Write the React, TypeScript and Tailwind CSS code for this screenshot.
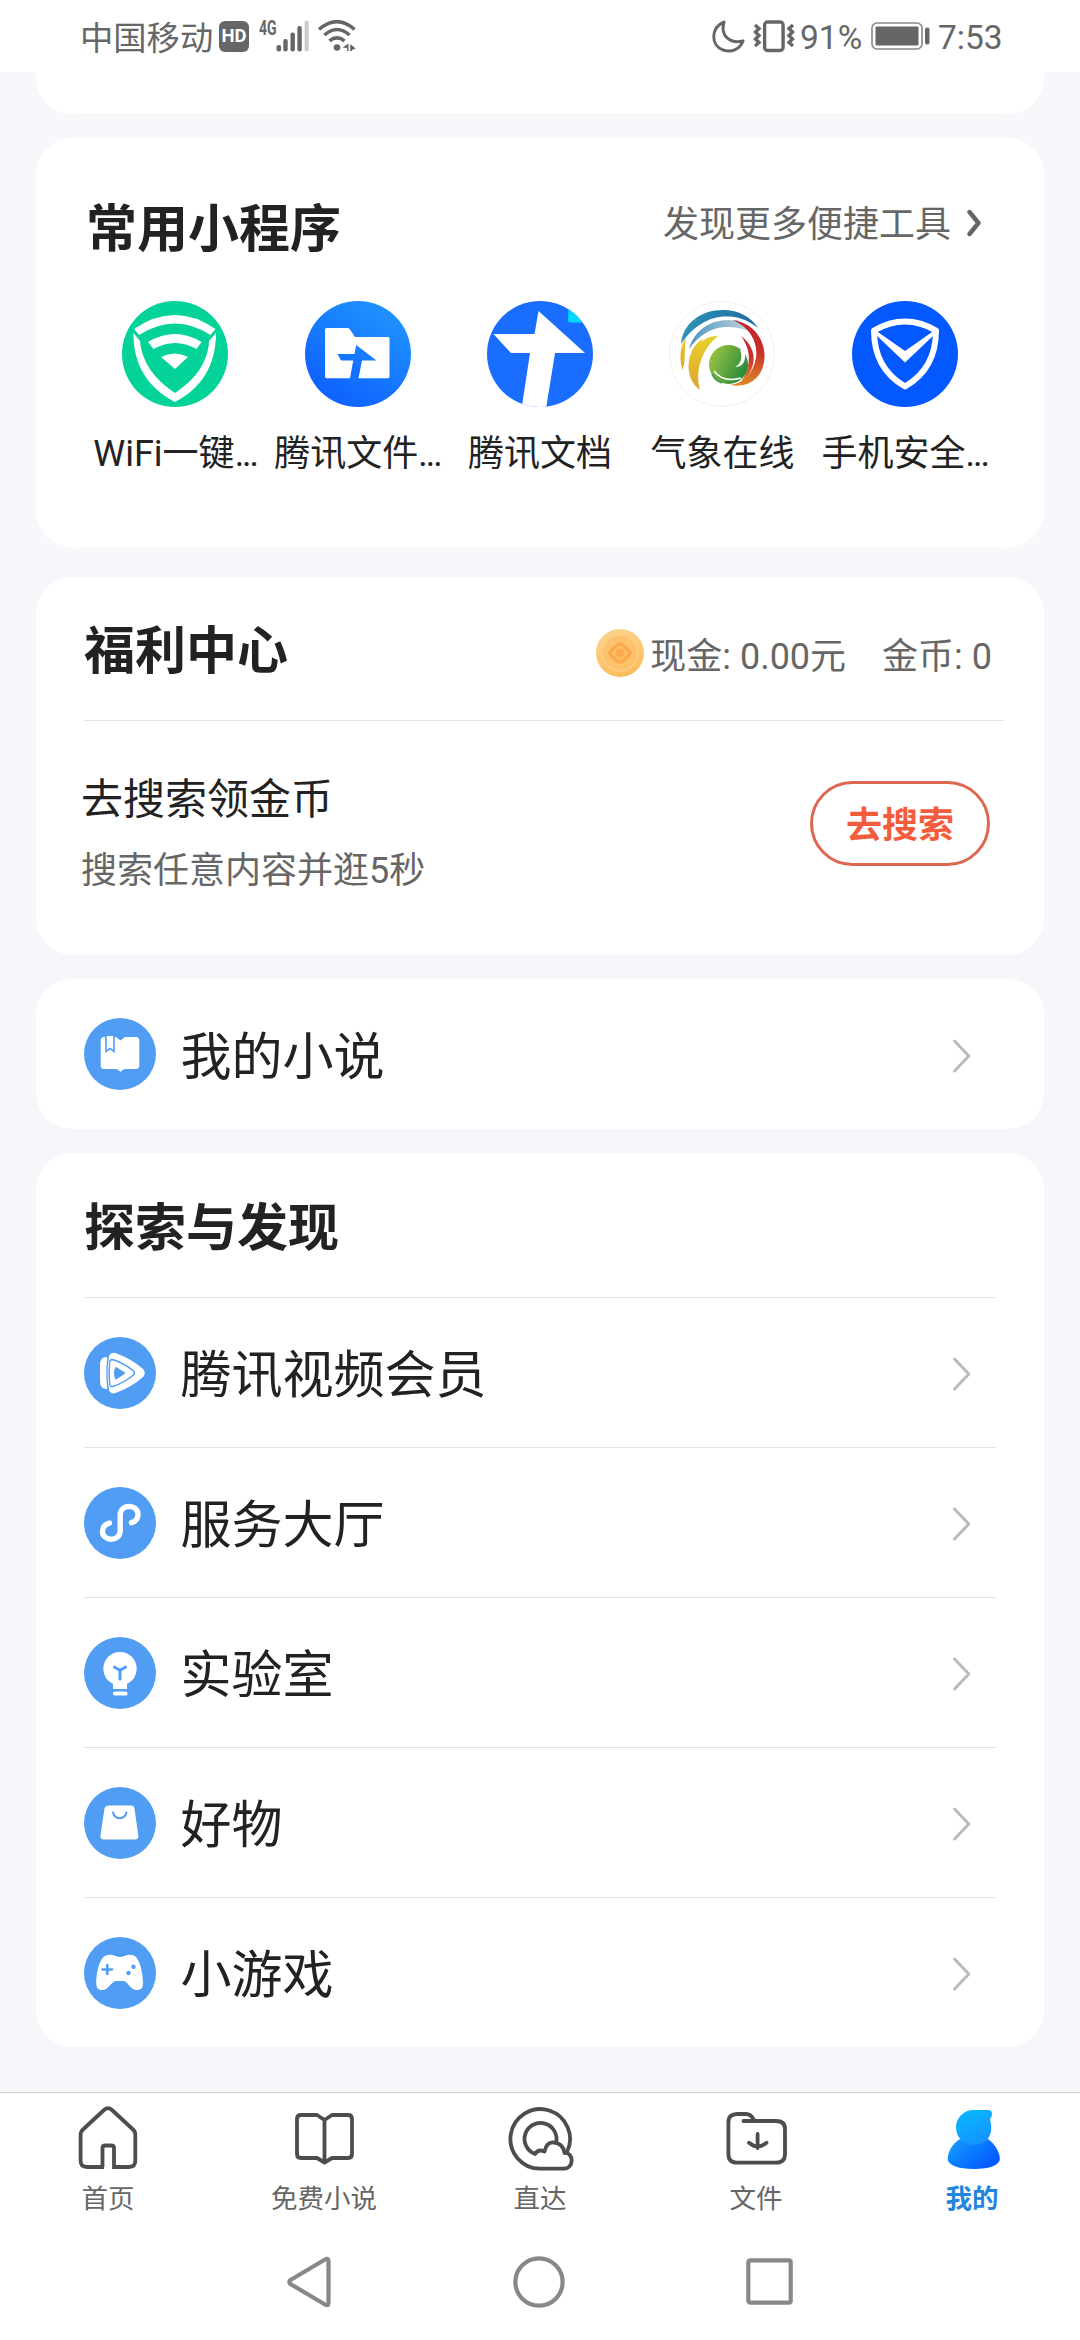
import type { ReactNode } from "react";

function StatusBar() {
  return (
    <header className="flex h-[72px] items-center justify-between bg-white pr-[78px] pl-[80px] text-[#666]">
      <div className="flex items-center">
        <span className="w-[134px] pt-[5px] text-[33.3px] leading-[40px] whitespace-nowrap">中国移动</span>
        <span className="ml-[5px] flex h-[31px] w-[30px] items-center justify-center rounded-[6px] bg-[#666] text-[18.5px] leading-none font-bold text-white">
          HD
        </span>
        <span className="mt-[-17px] ml-[10px] inline-block w-[18px] origin-left scale-x-70 text-[20px] leading-none font-bold">4G</span>
        <svg width="34" height="32" viewBox="0 0 34 32" className="-ml-px" fill="#666">
          <rect x="0.5" y="25" width="4.6" height="6.5" rx="2" />
          <rect x="7.3" y="19" width="4.4" height="12.5" rx="2" />
          <rect x="14.5" y="12.5" width="4.4" height="19" rx="2" />
          <rect x="21.4" y="6" width="4.4" height="25.5" rx="2" />
          <rect x="28.6" y="0.5" width="4.2" height="31" rx="2" fill="#ccc" />
        </svg>
        <svg width="40" height="32" viewBox="0 0 40 32" className="ml-[8px]" fill="none" stroke="#666" strokeWidth="3.6">
          <path d="M1 9.5Q19 -6 36.500 9.500M6.500 15Q19 4 31.500 15M11.500 20.800Q19 15 26.500 20.800" />
          <circle cx="19" cy="27.500" r="3.300" fill="#666" stroke="none" />
          <path d="M30.500 23.500V31H29V28L24.500 27.500ZM32.200 24L37.700 28.500L34 30V31H32.200Z" fill="#666" stroke="none" />
        </svg>
      </div>
      <div className="flex items-center">
        <svg width="34" height="34" viewBox="0 0 34 34" fill="none" stroke="#666" strokeWidth="3" strokeLinejoin="round">
          <path d="M12 3C-2 9-1 27 11 31C20 34 28 30 31 22C18 25 8 17 12 3Z" />
        </svg>
        <svg width="42" height="34" viewBox="0 0 42 34" className="ml-[7px]" fill="none" stroke="#666" strokeWidth="3.4">
          <rect x="11.600" y="3" width="18.500" height="28.500" rx="3" />
          <path d="M2 6L6 9.500L2.500 13L6 16.500L2.500 20L6 23.500L2 27M40 6L36 9.500L39.500 13L36 16.500L39.500 20L36 23.500L40 27" />
        </svg>
        <span className="ml-[5px] w-[72px] pt-[3px] text-[33.5px] leading-[40px]">91%</span>
        <svg width="60" height="28" viewBox="0 0 60 28" className="-ml-px">
          <rect x="1" y="1" width="50" height="26" rx="5" fill="none" stroke="#888" strokeWidth="1.600" />
          <rect x="4.500" y="4.500" width="43" height="19" rx="1" fill="#666" />
          <rect x="54" y="5.500" width="4.500" height="17" rx="2" fill="#666" />
        </svg>
        <span className="ml-[7px] w-[64px] pt-[3px] text-[33.5px] leading-[40px]">7:53</span>
      </div>
    </header>
  );
}

function WifiManagerIcon() {
  return (
    <svg width="106" height="106" viewBox="0 0 106 106">
      <circle cx="53" cy="53" r="53" fill="#03d398" />
      <g fill="#fff">
        <path d="M12 28Q53 0 93.500 28L88.500 34Q53 11 17 34Z" />
        <path d="M26 41Q53 25 79.500 41L74.500 48Q53 36 31.500 48Z" />
        <path d="M39 56Q53 49 66 56L53 68Z" />
        <path d="M11.500 32L18 40C20 61 32 78 53 92C74 78 86 61 87 40L94 32C94 64 80 87 53 101C26 87 11 64 11.500 32Z" />
      </g>
    </svg>
  );
}

function FileFolderIcon() {
  return (
    <svg width="106" height="106" viewBox="0 0 106 106">
      <defs>
        <linearGradient id="folderBlue" x1="0.2" y1="1" x2="0.8" y2="0.1">
          <stop offset="0" stopColor="#0d5dff" />
          <stop offset="1" stopColor="#1f92fd" />
        </linearGradient>
      </defs>
      <circle cx="53" cy="53" r="53" fill="url(#folderBlue)" />
      <path d="M21.500 27H42.500Q44 27 44.800 28.200L50 36H83Q84.500 36 84.500 37.500V75.500Q84.500 77.300 83 77.300H53.500L57 59.500H71.500L51.200 44L49.500 53H32.500L36 59.500H48.200L45 77.300H21.500Q20 77.300 20 75.500V28.500Q20 27 21.500 27Z" fill="#fff" />
    </svg>
  );
}

function DocsIcon() {
  return (
    <svg width="106" height="106" viewBox="0 0 106 106">
      <defs>
        <clipPath id="docsCircle">
          <circle cx="53" cy="53" r="53" />
        </clipPath>
      </defs>
      <g clipPath="url(#docsCircle)">
        <rect width="106" height="106" fill="#1a6eff" />
        <path d="M51.500 10L98 52H68L59 108H34.500L43 52H24L6.500 33H47.500Z" fill="#fff" />
        <path d="M82 0L81 19Q81 21.500 83.500 21.500H106V0Z" fill="#00d9ff" />
      </g>
    </svg>
  );
}

function WeatherIcon() {
  return (
    <svg width="106" height="106" viewBox="0 0 106 106">
      <defs>
        <linearGradient id="wGreen" x1="0" y1="0" x2="1" y2="0.5">
          <stop offset="0" stopColor="#a9cb45" />
          <stop offset="1" stopColor="#2c8c3a" />
        </linearGradient>
        <linearGradient id="wRed" x1="0" y1="0" x2="0" y2="1">
          <stop offset="0" stopColor="#c3232b" />
          <stop offset="0.500" stopColor="#c8322a" />
          <stop offset="1" stopColor="#dd8a26" />
        </linearGradient>
        <linearGradient id="wBlue" x1="0" y1="0" x2="1" y2="0">
          <stop offset="0" stopColor="#2f93b8" />
          <stop offset="1" stopColor="#216a9f" />
        </linearGradient>
        <linearGradient id="wSky" x1="0" y1="0" x2="1" y2="0">
          <stop offset="0" stopColor="#4a96c0" />
          <stop offset="1" stopColor="#c9d6de" />
        </linearGradient>
        <linearGradient id="wYellow" x1="0" y1="0" x2="0" y2="1">
          <stop offset="0" stopColor="#e8d02c" />
          <stop offset="1" stopColor="#dfa32e" />
        </linearGradient>
      </defs>
      <circle cx="53" cy="53" r="52.500" fill="#fff" stroke="#f1eeee" />
      <path d="M12 43C14 22 32 9 54 9C70 9 82 16 89 27C77 17 66 15 54 15.500C36 17 22 28 12 43Z" fill="url(#wBlue)" />
      <path d="M20 48C25 30 40 19 60 19C72 20 80 25 84 32C75 27 66 26 55 26C42 27 30 34 20 48Z" fill="url(#wSky)" />
      <path d="M64 19C84 22 96 38 95.500 56C95 76 80 88 61 84C76 82 84 72 87 57C89 42 82 27 64 19Z" fill="url(#wRed)" />
      <path d="M72 35C84 44 87 56 83 67C80 75 76 79 72 81C82 66 83 50 72 35Z" fill="url(#wRed)" />
      <path d="M17 36C11 45 10 57 13.500 69C17 60 15 49 17 36Z" fill="url(#wYellow)" />
      <path d="M49 35C42 35 37 37 33 41L34 38C18 46 13 76 31 89C26 70 32 49 49 35Z" fill="url(#wYellow)" />
      <circle cx="59.500" cy="63.500" r="19.500" fill="url(#wGreen)" />
      <path d="M71 48C74 57 72 63 66 66C74 66 77 60 76 51Z" fill="#fff" />
      <path d="M45 70Q54 82 72 77" stroke="#fff" strokeWidth="1.500" fill="none" />
      <path d="M43 73Q46 80 53 82" stroke="#3d9540" strokeWidth="1.500" fill="none" />
    </svg>
  );
}

function SecurityIcon() {
  return (
    <svg width="106" height="106" viewBox="0 0 106 106">
      <circle cx="53" cy="53" r="53" fill="#0359ff" />
      <path d="M22 29.500Q53 11.500 84 29.500C84 55 73 74 53 85.500C33 74 22 55 22 29.500Z" fill="none" stroke="#fff" strokeWidth="6" strokeLinejoin="round" />
      <path d="M23 29L53 50L83 29L83 33L53 61.500L23 33Z" fill="#fff" />
    </svg>
  );
}

const miniApps: { label: string; clipped?: boolean; icon: ReactNode }[] = [
  { label: "WiFi一键", clipped: true, icon: <WifiManagerIcon /> },
  { label: "腾讯文件", clipped: true, icon: <FileFolderIcon /> },
  { label: "腾讯文档", icon: <DocsIcon /> },
  { label: "气象在线", icon: <WeatherIcon /> },
  { label: "手机安全", clipped: true, icon: <SecurityIcon /> },
];

function MiniApps() {
  return (
    <section className="mt-6 h-[409px] rounded-[36px] bg-white px-12 pt-[59px] shadow-[0_2px_24px_0_#fafafa]">
      <div className="flex h-[60px] items-center justify-between pr-[14px] pl-[2px]">
        <h2 className="pt-[5px] text-[51px] leading-[60px] font-bold">常用小程序</h2>
        <div className="-mt-1 flex items-center text-[36px] leading-[40px] text-[#666]">
          发现更多便捷工具
          <svg width="16" height="28" viewBox="0 0 16 28" className="-mt-1 ml-[15px]" fill="none" stroke="#666" strokeWidth="4.400" strokeLinecap="round" strokeLinejoin="round">
            <path d="M3.500 3L12.500 14L3.500 25" />
          </svg>
        </div>
      </div>
      <div className="mt-[44px] grid w-[912px] grid-cols-5">
        {miniApps.map((a) => (
          <div key={a.label} className="flex flex-col items-center">
            {a.icon}
            <span className="mt-[26px] text-[36px] leading-[42px] whitespace-nowrap">
              {a.label}
              {a.clipped && <span className="tracking-[-2px]">...</span>}
            </span>
          </div>
        ))}
      </div>
    </section>
  );
}

function Coin() {
  return (
    <svg width="48" height="48" viewBox="0 0 48 48">
      <defs>
        <linearGradient id="coin" x1="0.300" y1="0" x2="0.600" y2="1">
          <stop offset="0" stopColor="#fcd38b" />
          <stop offset="1" stopColor="#fcbb59" />
        </linearGradient>
      </defs>
      <circle cx="24" cy="24" r="24" fill="url(#coin)" />
      <circle cx="24" cy="24" r="18" fill="#fdc36c" stroke="#fccf86" strokeWidth="1.500" />
      <path d="M13.500 24Q20 15 24 15T34.500 24Q28 33 24 33T13.500 24Z" fill="#fdbd62" stroke="#fba94a" strokeWidth="3" strokeLinejoin="round" />
      <circle cx="24" cy="24" r="4.300" fill="#fbab4d" />
    </svg>
  );
}

function Welfare() {
  return (
    <section className="mt-[30px] h-[378px] rounded-[36px] bg-white pl-12">
      <div className="mr-[41px] flex h-[144px] items-center justify-between border-b border-[#e2e2e2] pr-[11px]">
        <h2 className="pt-[7px] text-[51px] leading-[60px] font-bold">福利中心</h2>
        <div className="flex items-center pt-[16px] text-[36px] leading-[42px] text-[#666]">
          <span className="mt-[-7px] mr-[6px]">
            <Coin />
          </span>
          <span>现金: 0.00元</span>
          <span className="ml-[36px]">金币: 0</span>
        </div>
      </div>
      <div className="mr-[54px] flex items-start justify-between pt-[53px]">
        <div className="-ml-[3px] pt-px">
          <div className="text-[42px] leading-[50px]">去搜索领金币</div>
          <div className="mt-[22px] text-[36px] leading-[48px] text-[#666]">搜索任意内容并逛5秒</div>
        </div>
        <button className="mt-[7px] flex h-[85px] w-[180px] items-center justify-center rounded-full border-3 border-[#dd6650] pt-[5px] text-[36px] font-bold text-[#f45c3e]">
          去搜索
        </button>
      </div>
    </section>
  );
}

function Disc({ children }: { children: ReactNode }) {
  return (
    <svg width="72" height="72" viewBox="0 0 72 72" className="shrink-0">
      <circle cx="36" cy="36" r="36" fill="#509df3" />
      {children}
    </svg>
  );
}

const novelIcon = (
  <Disc>
    <path d="M20 19H32L36.500 22.500L41 19H52Q55.300 19 55.300 22.500V47.500Q55.300 51 52 51H41Q39 51 36.500 54Q34 51 32 51H20Q16.700 51 16.700 47.500V22.500Q16.700 19 20 19Z" fill="#fff" />
    <path d="M22 18V33.500L26 30.500L30 33.500V18" fill="#fff" stroke="#509df3" strokeWidth="1.600" />
  </Disc>
);

const videoIcon = (
  <Disc>
    <path d="M24 20Q16 19 16 28V44Q16 53 24 52Z" fill="#fff" />
    <path d="M31.500 16Q25.500 15 24.500 21Q22.500 36 24.500 51Q25.500 58 31.500 56Q48 50 59 40Q62.500 36 59 32Q48 22 31.500 16Z" fill="#fff" />
    <path d="M24 20Q22 36 24 52" fill="none" stroke="#509df3" strokeWidth="1.300" />
    <path d="M28.500 22.500Q26 22.500 25.700 25Q24.500 36 25.700 47Q26 50 28.500 49.500Q40 46 49.500 38Q51.500 36 49.500 34Q40 26 28.500 22.500Z" fill="none" stroke="#509df3" strokeWidth="1.400" />
    <path d="M32 31L40 36.200L32 41.400Q30 36.200 32 31Z" fill="#509df3" stroke="#509df3" strokeWidth="2" strokeLinejoin="round" />
  </Disc>
);

const serviceIcon = (
  <Disc>
    <path d="M25.500 36C20 37.500 18.500 41 18.500 44.500C18.500 49 22.500 52.300 27 52.300C32 52.300 36.200 49 36.200 44V28C36.200 23 40 19.500 45 19.500C50 19.500 54 22.500 54 27.500C54 31 52 34.500 47.500 35.700" fill="none" stroke="#fff" strokeWidth="5.400" strokeLinecap="round" />
  </Disc>
);

const labIcon = (
  <Disc>
    <path d="M29 52V47Q19.300 42 19.300 31.500A16.700 16.500 0 0 1 52.700 31.500Q52.700 42 43 47V52Z" fill="#fff" />
    <rect x="29" y="54.500" width="14.500" height="4" rx="1.500" fill="#fff" />
    <path d="M30.500 30L36 33.500L41.500 30M36 34V42" fill="none" stroke="#509df3" strokeWidth="3" strokeLinecap="round" />
  </Disc>
);

const goodsIcon = (
  <Disc>
    <path d="M25 18.500H47Q50 18.500 50.500 21.500L54.300 48.500Q54.800 52.500 51 52.500H20Q16 52.500 16.500 48.500L20.500 21.500Q21 18.500 25 18.500Z" fill="#fff" />
    <path d="M29 25.500C31 33 40.500 33 42.500 25.500" fill="none" stroke="#509df3" strokeWidth="2" strokeLinecap="round" />
  </Disc>
);

const gameIcon = (
  <Disc>
    <path d="M24 18C29 17 31 20 36 20C41 20 43 17 48 18C55 18 59 35 59 46C59 51 57 53 53 53C46 53 44 44.500 39.500 44H32C27 44.500 25 53 18 53C14 53 12.300 51 12.300 46C12.300 35 16 18 24 18Z" fill="#fff" />
    <path d="M23.300 28V37M18.500 32.500H28" stroke="#509df3" strokeWidth="2.600" strokeLinecap="round" />
    <circle cx="49.500" cy="29.700" r="2.200" fill="#509df3" />
    <circle cx="44.500" cy="36" r="2.200" fill="#509df3" />
  </Disc>
);

function Row({ icon, label }: { icon: ReactNode; label: string }) {
  return (
    <div className="flex grow items-center">
      {icon}
      <span className="ml-[24.5px] grow pt-[7px] text-[51px] leading-[60px]">{label}</span>
      <svg width="20" height="36" viewBox="0 0 20 36" className="mt-[3px] mr-[25px]" fill="none" stroke="#bababa" strokeWidth="3" strokeLinecap="round" strokeLinejoin="round">
        <path d="M3.500 3L17.800 18L3.500 33" />
      </svg>
    </div>
  );
}

const explore: { label: string; icon: ReactNode }[] = [
  { label: "腾讯视频会员", icon: videoIcon },
  { label: "服务大厅", icon: serviceIcon },
  { label: "实验室", icon: labIcon },
  { label: "好物", icon: goodsIcon },
  { label: "小游戏", icon: gameIcon },
];

function Explore() {
  return (
    <section className="mt-6 h-[894px] rounded-[36px] bg-white px-12">
      <h2 className="flex h-[144px] items-center pt-[7px] text-[51px] leading-[60px] font-bold">探索与发现</h2>
      {explore.map((e) => (
        <div key={e.label} className="flex h-[150px] border-t border-[#e2e2e2]">
          <Row icon={e.icon} label={e.label} />
        </div>
      ))}
    </section>
  );
}

function TabIcon({ children }: { children: ReactNode }) {
  return (
    <svg width="72" height="72" viewBox="0 0 72 72" fill="none" stroke="#4d4d4d" strokeWidth="3.800" strokeLinejoin="round">
      {children}
    </svg>
  );
}

const tabs: { label: string; icon: ReactNode; active?: boolean }[] = [
  {
    label: "首页",
    icon: (
      <TabIcon>
        <path d="M32 65H15Q8.600 65 8.600 58.500V33Q8.600 29.500 11.500 27L32 8Q36 4.500 40 8L60.500 27Q63.300 29.500 63.300 33V58.500Q63.300 65 57 65H42V46Q42 43.500 39 43.500H33.500Q30.500 43.500 30.500 46V65" strokeLinejoin="miter" />
      </TabIcon>
    ),
  },
  {
    label: "免费小说",
    icon: (
      <TabIcon>
        <path d="M36.500 18L29 13H13Q9 13 9 17V52Q9 56 13 56H29L36.500 60.500L44 56H60Q64 56 64 52V17Q64 13 60 13H44ZM36.500 18V60" />
      </TabIcon>
    ),
  },
  {
    label: "直达",
    icon: (
      <TabIcon>
        <path d="M60.500 66.700H36A29.800 29.800 0 1 1 63 50" />
        <path d="M52 41A16 16 0 1 0 31 52Q34 46.500 40.500 49.500C42 42 46 40 50 40.500C55 41 59.500 44 60.500 51C65 50.500 67.700 54.500 67.700 58.500C67.700 63.500 64 66.700 60 66.700" />
      </TabIcon>
    ),
  },
  {
    label: "文件",
    icon: (
      <TabIcon>
        <path d="M23.500 19H56Q65 19 65 27V52Q65 60.700 56 60.700H17Q8.400 60.700 8.400 52V20Q8.400 12 17 12H26Q31 12 34 18" strokeLinecap="round" />
        <path d="M37.600 32V46M29 40.700Q37.600 48 46.500 40.700" strokeLinecap="round" />
      </TabIcon>
    ),
  },
  {
    label: "我的",
    active: true,
    icon: (
      <svg width="72" height="72" viewBox="0 0 72 72">
        <defs>
          <linearGradient id="meHead" x1="0.200" y1="0" x2="0.700" y2="1">
            <stop offset="0" stopColor="#08b9ff" />
            <stop offset="1" stopColor="#1591ff" />
          </linearGradient>
          <linearGradient id="meBody" x1="0" y1="0.200" x2="0.900" y2="0.800">
            <stop offset="0" stopColor="#149aff" />
            <stop offset="0.600" stopColor="#0773ff" />
            <stop offset="1" stopColor="#0559ff" />
          </linearGradient>
        </defs>
        <path d="M24 37C16 42 11.700 50 11.700 57C11.700 63 22 67 38 67S63.800 63 63.800 57C63.800 50 59 42 52 37Z" fill="url(#meBody)" />
        <path d="M37.500 8H52Q56 8 56 12Q56 15 54 17Q55.500 22 55 29C54 38 46 43 38 43C28 43 20 35.500 20 25.500S28 8 37.500 8Z" fill="url(#meHead)" />
      </svg>
    ),
  },
];

function TabBar() {
  return (
    <nav className="grid h-[135px] grid-cols-5 border-t border-[#cfcfcf] bg-white">
      {tabs.map((t) => (
        <div key={t.label} className="flex flex-col items-center pt-[9px]">
          {t.icon}
          <span
            className={
              t.active
                ? "mt-[9px] text-[26.5px] leading-[32px] font-bold text-[#2385dd]"
                : "mt-[9px] text-[26.5px] leading-[32px] text-[#666]"
            }
          >
            {t.label}
          </span>
        </div>
      ))}
    </nav>
  );
}

function SystemNav() {
  return (
    <footer className="flex h-[113px] items-center justify-between bg-white pr-[287px] pb-[4px] pl-[286px]">
      <svg width="46" height="52" viewBox="0 0 46 52" fill="none" stroke="#888" strokeWidth="4.200" strokeLinejoin="round">
        <path d="M39 3.500Q42.500 1.500 42.500 5V47Q42.500 50.500 39 48.500L4.500 28Q2 26 4.500 24Z" />
      </svg>
      <svg width="52" height="52" viewBox="0 0 52 52" fill="none" stroke="#888" strokeWidth="4.200">
        <circle cx="26" cy="26" r="23.600" />
      </svg>
      <svg width="47" height="47" viewBox="0 0 47 47" fill="none" stroke="#888" strokeWidth="4.200">
        <rect x="2.300" y="2.300" width="42.400" height="42.400" rx="2" />
      </svg>
    </footer>
  );
}

export default function App() {
  return (
    <div className="flex h-[2340px] w-[1080px] flex-col overflow-hidden bg-[#f5f7fb] font-[Roboto,'Noto_Sans_CJK_SC',sans-serif] text-[#222]">
      <StatusBar />
      <main className="h-[2020px] overflow-hidden px-9">
        <div className="h-[42px] rounded-b-[36px] bg-white shadow-[0_2px_24px_0_#fafafa]" />
        <MiniApps />
        <Welfare />
        <section className="mt-6 flex h-[150px] rounded-[36px] bg-white px-12">
          <Row icon={novelIcon} label="我的小说" />
        </section>
        <Explore />
      </main>
      <TabBar />
      <SystemNav />
    </div>
  );
}
